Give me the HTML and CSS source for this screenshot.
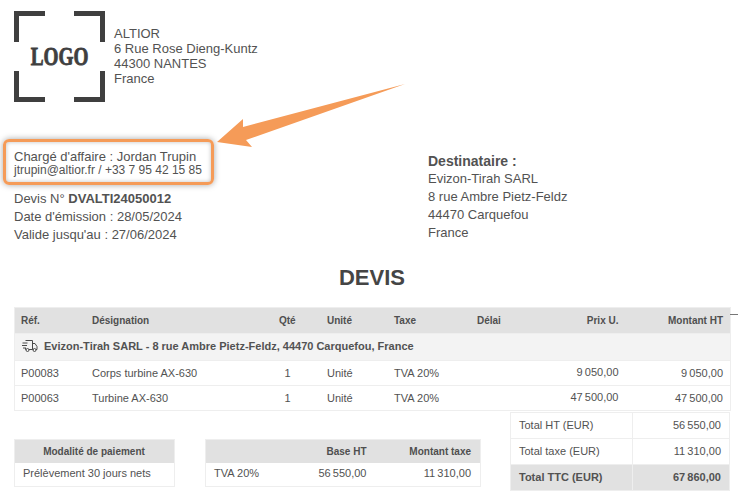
FILE: index.html
```html
<!DOCTYPE html>
<html lang="fr">
<head>
<meta charset="utf-8">
<title>Devis</title>
<link rel="stylesheet" href="styles.css">
</head>
<body>
<div class="page">
  <header class="head">
    <div class="logo">
      <i class="corner tl"></i><i class="corner tr"></i><i class="corner bl"></i><i class="corner br"></i>
      <span class="logo-text">LOGO</span>
    </div>
    <address class="sender">ALTIOR<br>6 Rue Rose Dieng-Kuntz<br>44300 NANTES<br>France</address>
  </header>

  <section class="parties">
    <div class="left">
      <div class="contact">
        <div class="contact-name">Chargé d'affaire : Jordan Trupin</div>
        <div class="contact-mail">jtrupin@altior.fr / +33 7 95 42 15 85</div>
      </div>
      <div class="meta">
        <div>Devis N° <b>DVALTI24050012</b></div>
        <div>Date d'émission : 28/05/2024</div>
        <div>Valide jusqu'au : 27/06/2024</div>
      </div>
    </div>
    <div class="dest">
      <div class="dest-title">Destinataire :</div>
      <div>Evizon-Tirah SARL</div>
      <div>8 rue Ambre Pietz-Feldz</div>
      <div>44470 Carquefou</div>
      <div>France</div>
    </div>
  </section>

  <h1 class="title">DEVIS</h1>

  <div class="lines-wrap">
    <table class="lines">
      <colgroup><col class="c1"><col class="c2"><col class="c3"><col class="c4"><col class="c5"><col class="c6"><col class="c7"><col class="c8"></colgroup>
      <thead>
        <tr><th>Réf.</th><th>Désignation</th><th>Qté</th><th>Unité</th><th>Taxe</th><th>Délai</th><th class="num price">Prix U.</th><th class="num">Montant HT</th></tr>
      </thead>
      <tbody>
        <tr class="group"><td colspan="8"><svg class="truck" viewBox="0 0 16 14" width="16" height="14" fill="none" stroke="#4a4a4a" stroke-width="1"><path d="M3.5 1.5h7v9H7M10.5 4.5h2.5l2 3v3h-1M10.5 10.5h1M0.5 4h5M0 6.5h5M1 9h3M3.5 9v1.5h.5"/><circle cx="5.5" cy="11" r="1.5"/><circle cx="12.5" cy="11" r="1.5"/></svg>Evizon-Tirah SARL - 8 rue Ambre Pietz-Feldz, 44470 Carquefou, France</td></tr>
        <tr><td>P00083</td><td>Corps turbine AX-630</td><td class="qty">1</td><td>Unité</td><td>TVA 20%</td><td></td><td class="num price raised">9&#8239;050,00</td><td class="num">9&#8239;050,00</td></tr>
        <tr><td>P00063</td><td>Turbine AX-630</td><td class="qty">1</td><td>Unité</td><td>TVA 20%</td><td></td><td class="num price raised">47&#8239;500,00</td><td class="num">47&#8239;500,00</td></tr>
      </tbody>
    </table>
    <i class="dash"></i>
  </div>

  <div class="bottom">
    <table class="mini pay">
      <thead><tr><th>Modalité de paiement</th></tr></thead>
      <tbody><tr><td>Prélèvement 30 jours nets</td></tr></tbody>
    </table>
    <table class="mini tax">
      <colgroup><col class="t1"><col class="t2"><col class="t3"></colgroup>
      <thead><tr><th></th><th class="num">Base HT</th><th class="num">Montant taxe</th></tr></thead>
      <tbody><tr><td>TVA 20%</td><td class="num">56&#8239;550,00</td><td class="num">11&#8239;310,00</td></tr></tbody>
    </table>
    <table class="totals">
      <tbody>
        <tr><td>Total HT (EUR)</td><td class="num">56&#8239;550,00</td></tr>
        <tr><td>Total taxe (EUR)</td><td class="num">11&#8239;310,00</td></tr>
        <tr class="ttc"><td>Total TTC (EUR)</td><td class="num">67&#8239;860,00</td></tr>
      </tbody>
    </table>
  </div>
</div>
<svg class="arrow" viewBox="0 0 744 496" width="744" height="496"><polygon points="217,142 243,119 243,127 405,84 246,140 252,147" fill="#f59b58"/></svg>
</body>
</html>
```
FILE: styles.css
```css
* { box-sizing: border-box; }
html, body { margin: 0; height: 100%; overflow: hidden; background: #fff; }
body { font-family: "Liberation Sans", Arial, sans-serif; color: #525252; position: relative; }
.page { padding: 11px 14px 0; width: 744px; }
.head { display: flex; gap: 9px; }
.logo { position: relative; width: 91px; height: 91px; display: flex; align-items: center; justify-content: center; flex: none; }
.corner { position: absolute; width: 31px; height: 31px; border: 0 solid #3f3f3f; }
.tl { left: 0; top: 0; border-width: 5px 0 0 5px; }
.tr { right: 0; top: 0; border-width: 5px 5px 0 0; }
.bl { left: 0; bottom: 0; border-width: 0 0 5px 5px; }
.br { right: 0; bottom: 0; border-width: 0 5px 5px 0; }
.logo-text { font-family: "Liberation Serif", serif; font-weight: 700; font-size: 25px; line-height: 25px; color: #3f3f3f; -webkit-text-stroke: .8px #3f3f3f; transform: scaleX(.77); }
.sender { font-style: normal; font-size: 13px; line-height: 15px; padding-top: 15px; }
.parties { display: flex; margin-top: 37px; }
.left { width: 414px; }
.contact { margin-left: -11px; width: 211px; height: 46px; border: 3px solid #f59b58; border-radius: 6px; padding: 8px 8px 0; box-shadow: 0 0 6px rgba(0,0,0,.35), inset 0 0 4px rgba(0,0,0,.25); }
.contact-name { font-size: 13px; line-height: 14px; }
.contact-mail { font-size: 12px; line-height: 13px; }
.meta { font-size: 13px; line-height: 18px; margin-top: 5px; }
.meta b { font-weight: 700; }
.dest { font-size: 13px; line-height: 18px; padding-top: 13px; }
.dest-title { font-weight: 700; font-size: 14px; }
.title { font-size: 22px; font-weight: 700; text-align: center; margin: 20px 0 0; line-height: 27px; height: 27px; color: #454545; }
.lines-wrap { position: relative; margin-top: 16px; }
table { border-collapse: collapse; table-layout: fixed; }
.lines { width: 716px; font-size: 11px; border: 1px solid #eee; }
.c1 { width: 72px; } .c2 { width: 187px; } .c3 { width: 48px; } .c4 { width: 67px; } .c5 { width: 83px; } .c6 { width: 70px; } .c7 { width: 85px; } .c8 { width: 104px; }
th { background: #e1e1e1; font-size: 10px; font-weight: 700; text-align: left; color: #4f4f4f; }
.lines th { height: 26px; padding: 0 7px 1px 5.5px; }
.lines th:first-child { padding-left: 6px; }
.lines td { height: 25px; padding: 0 7px 0 5.5px; border-top: 1px solid #eee; }
.lines td:first-child { padding-left: 6px; }
.lines .group td { height: 27px; background: #f3f3f3; font-weight: 700; padding: 0 7px 2px; }
.truck { vertical-align: -3px; margin-right: 6px; }
.num, th.num { text-align: right; }
.lines .qty { padding-left: 11px; }
.lines .price { padding-right: 8px; }
.lines .raised { padding-bottom: 2px; }
.dash { position: absolute; left: 716px; top: 7px; width: 8px; height: 1px; background: #777; }
.bottom { position: relative; display: flex; gap: 30px; padding-top: 28px; }
.mini { font-size: 11px; border: 1px solid #eee; height: 47px; }
.mini th { height: 23px; padding: 0 8px; }
.mini td { height: 24px; padding: 0 8px 2px; }
.mini th:last-child, .mini td:last-child { padding-right: 9px; }
.pay { width: 161px; }
.pay th { text-align: center; }
.tax { width: 275px; }
.t1 { width: 100px; } .t2 { width: 69px; } .t3 { width: 106px; }
.totals { position: absolute; left: 496px; top: 1px; width: 220px; font-size: 11px; border: 1px solid #eee; }
.totals td { height: 26px; padding: 0 8px 2px; border: 1px solid #eee; }
.totals td:first-child { width: 122px; }
.ttc td { background: #e1e1e1; font-weight: 700; }
.arrow { position: absolute; left: 0; top: 0; pointer-events: none; }
```
